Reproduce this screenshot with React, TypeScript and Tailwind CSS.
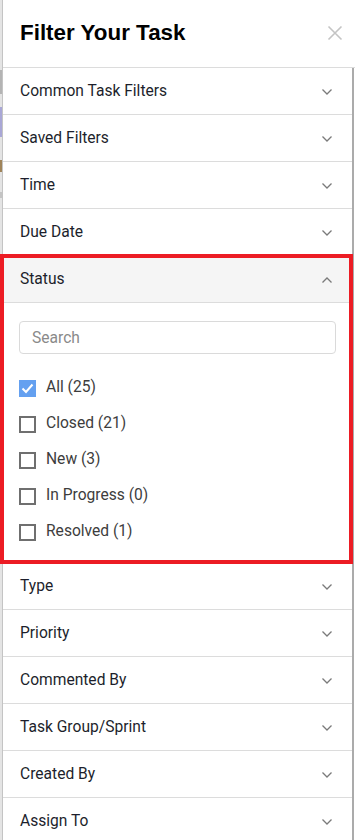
import React, { useState } from "react";

type Props = {};

const topFilters = ["Common Task Filters", "Saved Filters", "Time", "Due Date"];
const bottomFilters = ["Type", "Priority", "Commented By", "Task Group/Sprint", "Created By", "Assign To"];
const statuses = [
  { label: "All (25)", checked: true },
  { label: "Closed (21)", checked: false },
  { label: "New (3)", checked: false },
  { label: "In Progress (0)", checked: false },
  { label: "Resolved (1)", checked: false },
];

function Chevron({ up }: { up?: boolean }) {
  return (
    <svg width="12" height="8" viewBox="0 0 12 8" className="text-[#7a7a7a]">
      <path
        d={up ? "M1.5 6.5 L6 2 L10.5 6.5" : "M1.5 1.5 L6 6 L10.5 1.5"}
        fill="none"
        stroke="currentColor"
        strokeWidth="1.3"
      />
    </svg>
  );
}

function FilterRow({ title }: { title: string }) {
  return (
    <div className="shrink-0 flex items-center justify-between h-[47px] pt-[2px] pl-[17px] pr-[19px] border-b border-[#dcdcdc]">
      <p className="font-['Roboto',sans-serif] text-[15.6px] text-[#1d1f2c]">{title}</p>
      <Chevron />
    </div>
  );
}

function StatusFilter({}: Props) {
  const [items, setItems] = useState(statuses);

  const toggle = (i: number) => {
    setItems(items.map((it, idx) => (idx === i ? { ...it, checked: !it.checked } : it)));
  };

  return (
    <div className="shrink-0 border-b border-[#dcdcdc]">
      <div className="flex items-center justify-between h-[47px] pt-[2px] pl-[17px] pr-[19px] bg-[#f5f5f5] border-b border-[#dcdcdc]">
        <p className="font-['Roboto',sans-serif] text-[15.6px] text-[#1d1f2c]">Status</p>
        <Chevron up />
      </div>
      <div className="pl-[16px] pr-[16px] pt-[18px] pb-[13px] h-[259px]">
        <input
          placeholder="Search"
          className="w-full h-[33px] border border-[#dadada] rounded-[4px] px-3 font-['Roboto',sans-serif] text-[15.6px] text-[#333] placeholder:text-[#8a8a8a] outline-none"
        />
        <div className="mt-[16px] flex flex-col">
          {items.map((it, i) => (
            <div key={it.label} onClick={() => toggle(i)} className="flex items-center gap-[10px] h-[36px] cursor-pointer">
              {it.checked ? (
                <div className="w-[17px] h-[17px] bg-[#64a0f0] flex items-center justify-center">
                  <svg width="13" height="11" viewBox="0 0 13 11">
                    <path d="M1.5 5.5 L5 9 L11.5 1.5" fill="none" stroke="white" strokeWidth="2" />
                  </svg>
                </div>
              ) : (
                <div className="w-[17px] h-[17px] border-2 border-[#6f6f6f]" />
              )}
              <p className="font-['Roboto',sans-serif] text-[15.6px] text-[#3d3d3d]">{it.label}</p>
            </div>
          ))}
        </div>
      </div>
    </div>
  );
}

export default function App({}: Props) {
  return (
    <div className="relative flex w-[355px] h-[840px] overflow-hidden bg-white">
      {/* page behind the drawer */}
      <div className="w-[3px] shrink-0 flex flex-col bg-[#e4e4e4] border-r border-[#c4c4c4]">
        <div className="h-[70px]" />
        <div className="h-[24px] bg-[#b4b4b4]" />
        <div className="h-[13px]" />
        <div className="h-[30px] bg-[#a9a7d6]" />
        <div className="h-[23px]" />
        <div className="h-[12px] bg-[#a0845a]" />
        <div className="h-[20px]" />
        <div className="h-[6px] bg-[#c4c4c4]" />
      </div>

      <div className="flex-1 flex flex-col">
        <div className="shrink-0 flex items-center justify-between h-[68px] pb-[2px] pl-[17px] pr-[12px] border-b border-[#dcdcdc]">
          <h4 className="font-['Liberation_Sans',Arial,sans-serif] font-bold text-[22.4px] text-black">Filter Your Task</h4>
          <svg width="16" height="16" viewBox="0 0 16 16" className="text-[#c4c4c4]">
            <path d="M1.5 1.5 L14.5 14.5 M14.5 1.5 L1.5 14.5" stroke="currentColor" strokeWidth="1.6" />
          </svg>
        </div>
        <div className="flex shrink-0">
          <div className="flex-1 flex flex-col">
            {topFilters.map((f) => (
              <FilterRow key={f} title={f} />
            ))}
            <StatusFilter />
            {bottomFilters.map((f) => (
              <FilterRow key={f} title={f} />
            ))}
          </div>
          <div className="w-[2px] bg-[#ababab]" />
          <div className="w-[1px]" />
        </div>
      </div>

      {/* highlight around the status section */}
      <div className="absolute left-0 top-[254px] w-[353px] h-[310px] border-4 border-[#ec1c24] pointer-events-none" />
    </div>
  );
}
